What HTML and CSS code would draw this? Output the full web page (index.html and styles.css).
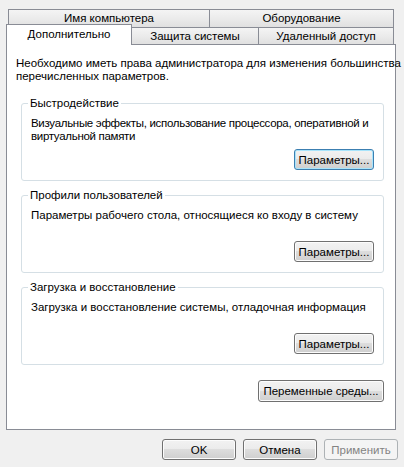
FILE: index.html
```html
<!DOCTYPE html>
<html>

<head>
    <meta charset="UTF-8">
    <title>Свойства системы</title>
    <link rel="stylesheet" href="styles.css">
</head>

<body>
    <div class="dialog">
        <div class="tabs">
            <div class="tab-row">
                <div class="tab tab-name">Имя компьютера</div>
                <div class="tab tab-hw">Оборудование</div>
            </div>
            <div class="tab-row">
                <div class="tab tab-active">Дополнительно</div>
                <div class="tab tab-protect">Защита системы</div>
                <div class="tab tab-remote">Удаленный доступ</div>
            </div>
        </div>

        <div class="panel">
            <p class="intro">Необходимо иметь права администратора для изменения большинства<br>перечисленных параметров.</p>

            <fieldset class="group">
                <legend>Быстродействие</legend>
                <p class="tight">Визуальные эффекты, использование процессора, оперативной и<br>виртуальной памяти</p>
                <div class="group-btn">
                    <button class="btn btn-focus">Параметры...</button>
                </div>
            </fieldset>

            <fieldset class="group">
                <legend>Профили пользователей</legend>
                <p>Параметры рабочего стола, относящиеся ко входу в систему</p>
                <div class="group-btn">
                    <button class="btn">Параметры...</button>
                </div>
            </fieldset>

            <fieldset class="group">
                <legend>Загрузка и восстановление</legend>
                <p>Загрузка и восстановление системы, отладочная информация</p>
                <div class="group-btn">
                    <button class="btn">Параметры...</button>
                </div>
            </fieldset>

            <div class="env">
                <button class="btn btn-env">Переменные среды...</button>
            </div>
        </div>

        <div class="footer">
            <button class="btn">OK</button>
            <button class="btn">Отмена</button>
            <button class="btn" disabled>Применить</button>
        </div>
    </div>
</body>

</html>
```

FILE: styles.css
```css
body {
    margin: 0;
    background: #f0f0f0;
    font-family: "Liberation Sans", Arial, sans-serif;
    font-size: 11.5px;
    color: #000;
}

.dialog {
    width: 404px;
    height: 467px;
}

/* вкладки */
.tabs {
    padding: 9px 0 0 8px;
}

.tab-row {
    display: flex;
    align-items: flex-start;
    height: 18px;
}

.tab-row+.tab-row {
    height: 17px;
}

.tab {
    box-sizing: border-box;
    height: 18px;
    border: 1px solid #898c95;
    border-bottom: 0;
    margin-left: -1px;
    background: linear-gradient(#f4f4f4, #ebebeb 50%, #e0e0e0);
    text-align: center;
    line-height: 17px;
    white-space: nowrap;
}

.tab-row+.tab-row .tab {
    height: 17px;
    line-height: 17px;
}

.tab-name {
    width: 202px;
    margin-left: 0;
}

.tab-hw {
    width: 185px;
}

.tab-row+.tab-row .tab-active {
    position: relative;
    z-index: 1;
    width: 126px;
    height: 21px;
    margin: -3px 0 0 -2px;
    background: #fff;
    line-height: 19px;
}

.tab-protect {
    width: 128px;
}

.tab-remote {
    width: 136px;
}

/* содержимое */
.panel {
    box-sizing: border-box;
    width: 390px;
    height: 386px;
    margin-left: 6px;
    padding: 0 11px 0 14px;
    background: #fff;
    border: 1px solid #898c95;
}

p {
    margin: 0;
    line-height: 13px;
    white-space: nowrap;
}

.intro {
    margin: 12px -8px 14px -5px;
}

.group {
    min-width: 0;
    margin: 0 0 8px;
    padding: 0 9px 10px;
    border: 1px solid #d5dfe5;
    border-radius: 3px;
}

.group legend {
    margin-left: -3px;
    padding: 0 2px;
    line-height: 13px;
}

.group p {
    margin-top: 7px;
    min-height: 26px;
}

.group .tight {
    letter-spacing: -0.3px;
}

.group-btn {
    display: flex;
    justify-content: flex-end;
    margin-top: 6px;
}

.env {
    display: flex;
    justify-content: flex-end;
    margin-top: 15px;
}

/* кнопки */
.btn {
    box-sizing: border-box;
    width: 80px;
    height: 21px;
    padding: 0;
    border: 1px solid #707070;
    border-radius: 3px;
    background: linear-gradient(#f2f2f2, #ebebeb 50%, #dddddd 50%, #cfcfcf);
    box-shadow: inset 0 0 0 1px #fcfcfc;
    font-family: inherit;
    font-size: 11.5px;
    color: #000;
}

.btn-focus {
    border-color: #3c7fb1;
    box-shadow: inset 0 0 0 1px #a8e4fb;
}

.btn-env {
    width: 126px;
    height: 22px;
}

.btn:disabled {
    border-color: #adb2b5;
    background: #f4f4f4;
    box-shadow: none;
    color: #838383;
}

.footer {
    display: flex;
    justify-content: flex-end;
    gap: 7px;
    padding: 9px 6px 0 0;
}

.footer .btn {
    width: 74px;
}
```
